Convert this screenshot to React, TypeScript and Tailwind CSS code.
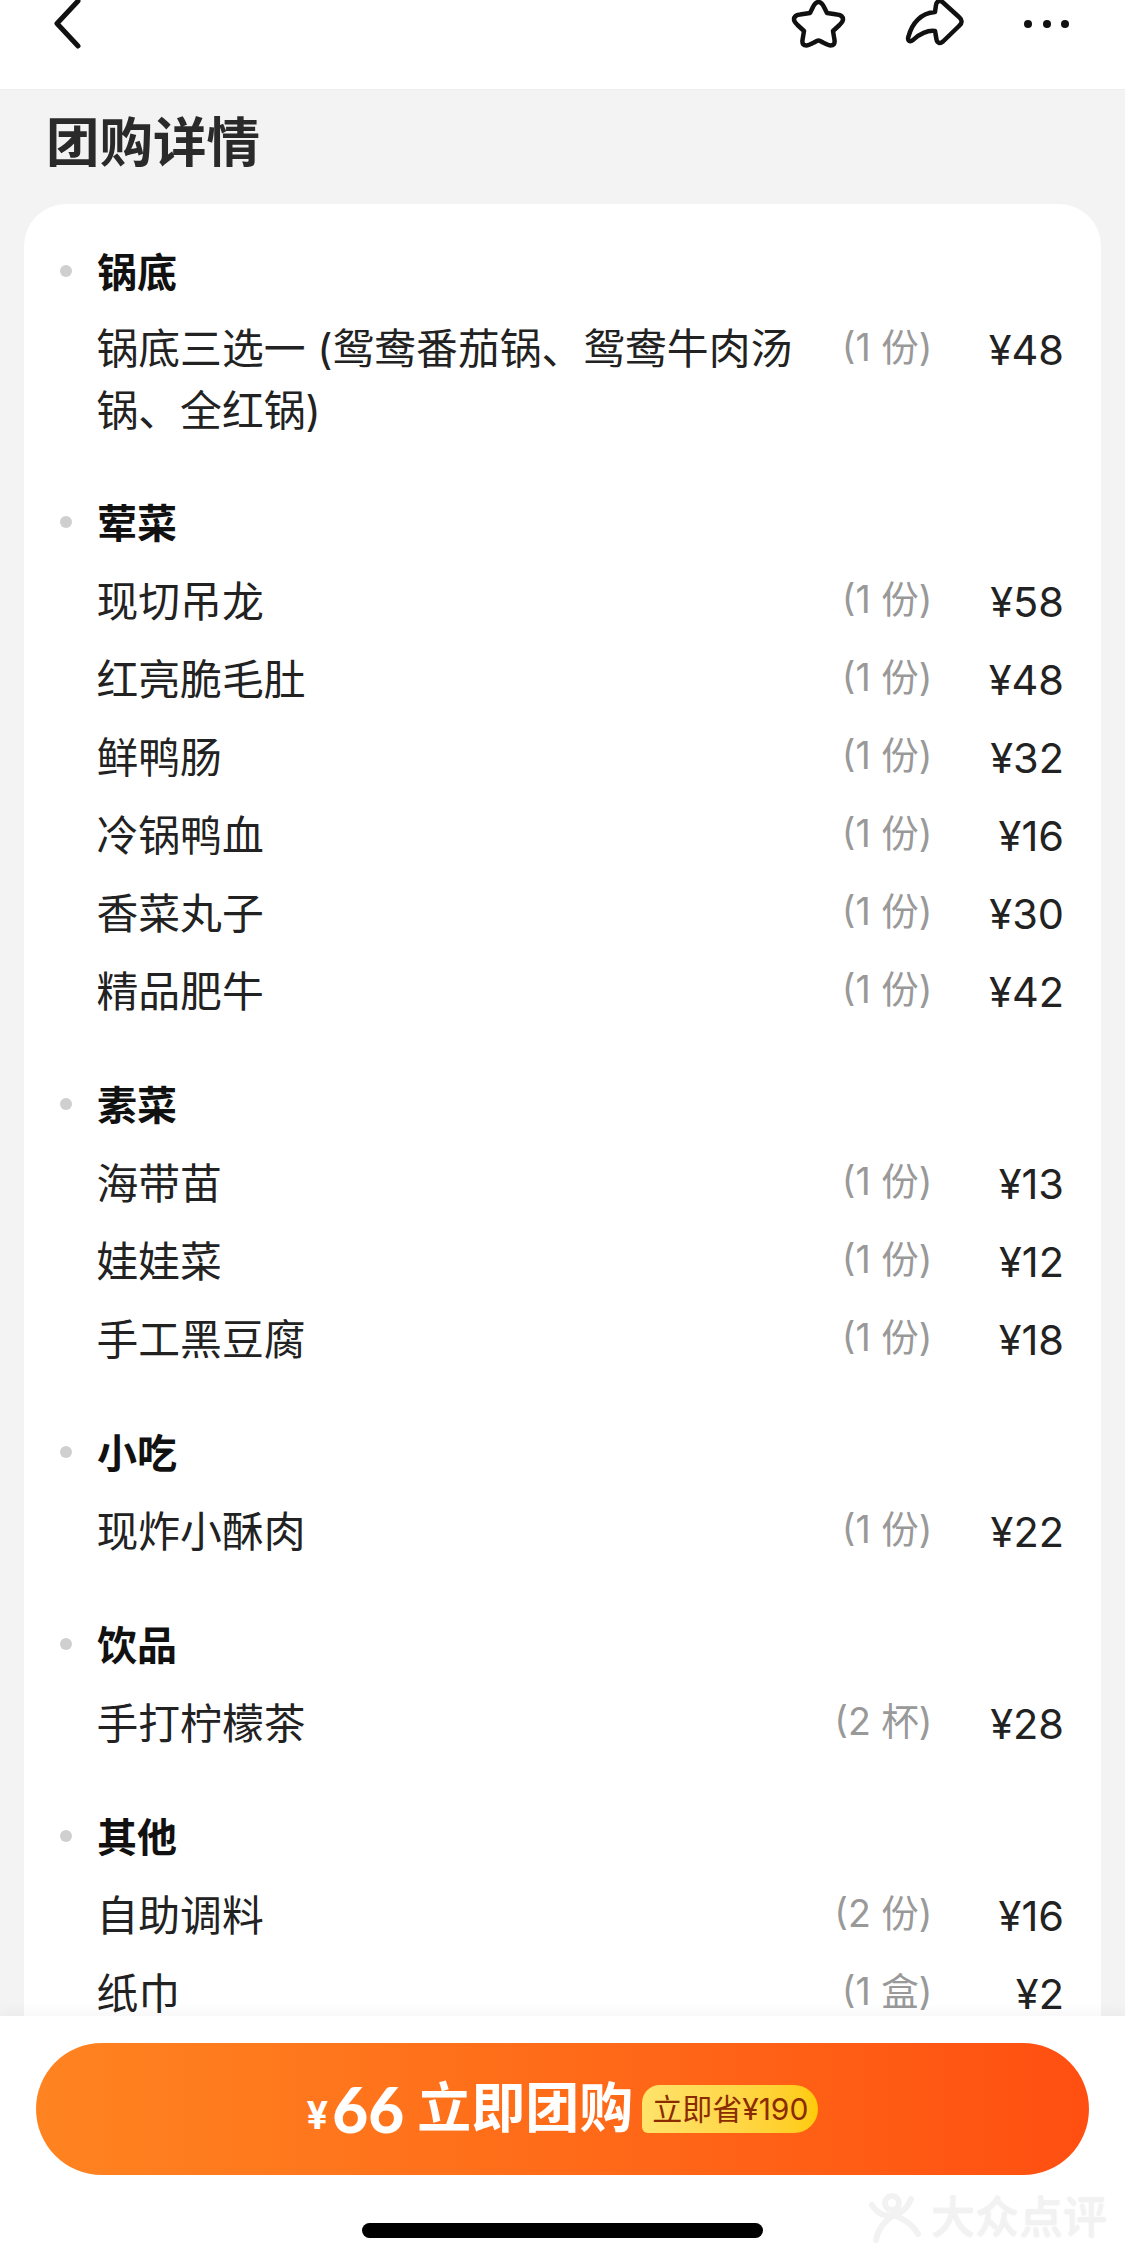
const cjk = "font-['Inter','Noto_Sans_CJK_SC',sans-serif]";

type Item = { name: string; qty: string; price: string; long?: boolean };
type Section = { title: string; items: Item[] };

const sections: Section[] = [
  { title: "锅底", items: [{ name: "锅底三选一 (鸳鸯番茄锅、鸳鸯牛肉汤锅、全红锅)", qty: "(1 份)", price: "¥48", long: true }] },
  {
    title: "荤菜",
    items: [
      { name: "现切吊龙", qty: "(1 份)", price: "¥58" },
      { name: "红亮脆毛肚", qty: "(1 份)", price: "¥48" },
      { name: "鲜鸭肠", qty: "(1 份)", price: "¥32" },
      { name: "冷锅鸭血", qty: "(1 份)", price: "¥16" },
      { name: "香菜丸子", qty: "(1 份)", price: "¥30" },
      { name: "精品肥牛", qty: "(1 份)", price: "¥42" },
    ],
  },
  {
    title: "素菜",
    items: [
      { name: "海带苗", qty: "(1 份)", price: "¥13" },
      { name: "娃娃菜", qty: "(1 份)", price: "¥12" },
      { name: "手工黑豆腐", qty: "(1 份)", price: "¥18" },
    ],
  },
  { title: "小吃", items: [{ name: "现炸小酥肉", qty: "(1 份)", price: "¥22" }] },
  { title: "饮品", items: [{ name: "手打柠檬茶", qty: "(2 杯)", price: "¥28" }] },
  {
    title: "其他",
    items: [
      { name: "自助调料", qty: "(2 份)", price: "¥16" },
      { name: "纸巾", qty: "(1 盒)", price: "¥2" },
    ],
  },
];

function Row({ item }: { item: Item }) {
  return (
    <div className={`flex items-start pl-[72.5px] pr-[37px] ${item.long ? "pt-[7px] pb-[7px]" : "py-[8px]"}`}>
      <div className={`w-[704px] text-[41.8px] text-[#222222] ${item.long ? "leading-[61.5px]" : "leading-[62px]"}`}>{item.name}</div>
      <div className="w-[132px] text-right text-[37.5px] leading-[58px] text-[#999999] whitespace-pre">{item.qty}</div>
      <div className="flex-1 text-right text-[41.5px] leading-[62px] text-[#222222]">{item.price}</div>
    </div>
  );
}

export default function App() {
  return (
    <div className={`${cjk} relative flex h-[2262px] w-[1125px] flex-col overflow-hidden bg-[#f3f3f3]`}>
      <header className="flex h-[90px] shrink-0 items-start border-b border-[#eeeeee] bg-white pl-[54px]">
        <svg width="28" height="47" viewBox="0 0 28 47" className="overflow-visible">
          <path d="M24 1 L3 23.5 L24 46" fill="none" stroke="#111111" strokeWidth="5" strokeLinecap="round" strokeLinejoin="round" />
        </svg>
        <svg width="52" height="48" viewBox="0 0 52 48" className="ml-[711px] overflow-visible">
          <path
            d="M25.5 2 C28 2 29.5 4 31 7 L34 13 L44 14.5 C48.5 15 50 17 50 19.5 C50 21.5 48.5 23 46.5 25 L40 31 L41.5 40 C42 44 40.5 45.5 37.5 45.5 C35.5 45.5 33 44 30 42.5 C27.5 41 26.5 40.5 25.5 40.5 C24.5 40.5 23.5 41 21 42.5 C18 44 15.5 45.5 13.5 45.5 C10.5 45.5 9 44 9.5 40 L11 31 L4.5 25 C2.5 23 1 21.5 1 19.5 C1 17 2.5 15 7 14.5 L17 13 L20 7 C21.5 4 23 2 25.5 2 Z"
            fill="none"
            stroke="#111111"
            strokeWidth="4.5"
            strokeLinejoin="round"
          />
        </svg>
        <svg width="58" height="48" viewBox="0 0 58 48" className="ml-[61px] overflow-visible">
          <path
            d="M29 12 L30 5 C30.5 1 34 0 37 2.5 L53 17 C56.5 20 56.5 23 53 26 L37 41.5 C34 44 31 43 30.5 39.5 L29 31 C22 30 13 34 7 40 C4 42.5 1 41 2.5 36.5 C6 23 15 13 29 12 Z"
            fill="none"
            stroke="#111111"
            strokeWidth="4.5"
            strokeLinejoin="round"
          />
        </svg>
        <div className="ml-[60px] mt-[20px] flex gap-[10.5px]">
          <span className="h-[8px] w-[8px] rounded-full bg-[#111111]" />
          <span className="h-[8px] w-[8px] rounded-full bg-[#111111]" />
          <span className="h-[8px] w-[8px] rounded-full bg-[#111111]" />
        </div>
      </header>

      <h1 className="ml-[46px] mt-[22px] shrink-0 text-[53.5px] font-bold leading-[62px] text-[#2a2a2a]">团购详情</h1>

      <main className="mx-[24px] mt-[30px] flex-1 overflow-hidden rounded-t-[42px] bg-white pt-[30px]">
        {sections.map((s) => (
          <section key={s.title} className="mb-[36px]">
            <div className="relative h-[78px] pl-[73px] text-[40px] font-bold leading-[78px] text-[#111111]">
              <span className="absolute left-[36px] top-[31px] h-[12px] w-[12px] rounded-full bg-[#cfcfcf]" />
              {s.title}
            </div>
            {s.items.map((it) => (
              <Row key={it.name} item={it} />
            ))}
          </section>
        ))}
      </main>

      <footer className="relative flex h-[246px] shrink-0 flex-col items-center bg-white pt-[27px] shadow-[0_-6px_10px_rgba(0,0,0,0.03)]">
        <div className="flex h-[132px] w-[1053px] items-center justify-center rounded-full bg-gradient-to-r from-[#ff8320] to-[#ff4f11] text-white">
          <span className="mt-[12px] text-[38px] font-bold leading-none">¥</span>
          <span className="ml-[4px] font-['Lato'] text-[62px] font-black leading-none">66</span>
          <span className="ml-[13px] text-[54px] font-bold leading-none">立即团购</span>
          <span className="ml-[9px] flex h-[48px] items-center rounded-[18px_24px_24px_6px] bg-gradient-to-r from-[#ffe36b] to-[#ffcb05] px-[10px] text-[30px] leading-none text-[#8a2c00]">
            立即省¥190
          </span>
        </div>
        <div className="mt-[48px] h-[15px] w-[401px] rounded-full bg-black" />
        <div className="absolute left-[868px] top-[174px] flex items-center">
          <svg width="54" height="54" viewBox="0 0 54 54">
            <g fill="none" stroke="#f2f2f2" strokeWidth="6" strokeLinecap="round">
              <circle cx="24" cy="13" r="7" />
              <path d="M4 15 C10 25 19 27 26 25 C34 23 40 17 43 9" />
              <path d="M8 50 C10 38 18 30 26 25 C36 29 46 36 50 44" />
            </g>
          </svg>
          <span className="ml-[9px] text-[44px] font-medium leading-none text-[#f2f2f2] [text-shadow:0_1px_2px_rgba(0,0,0,0.08)]">大众点评</span>
        </div>
      </footer>
    </div>
  );
}
